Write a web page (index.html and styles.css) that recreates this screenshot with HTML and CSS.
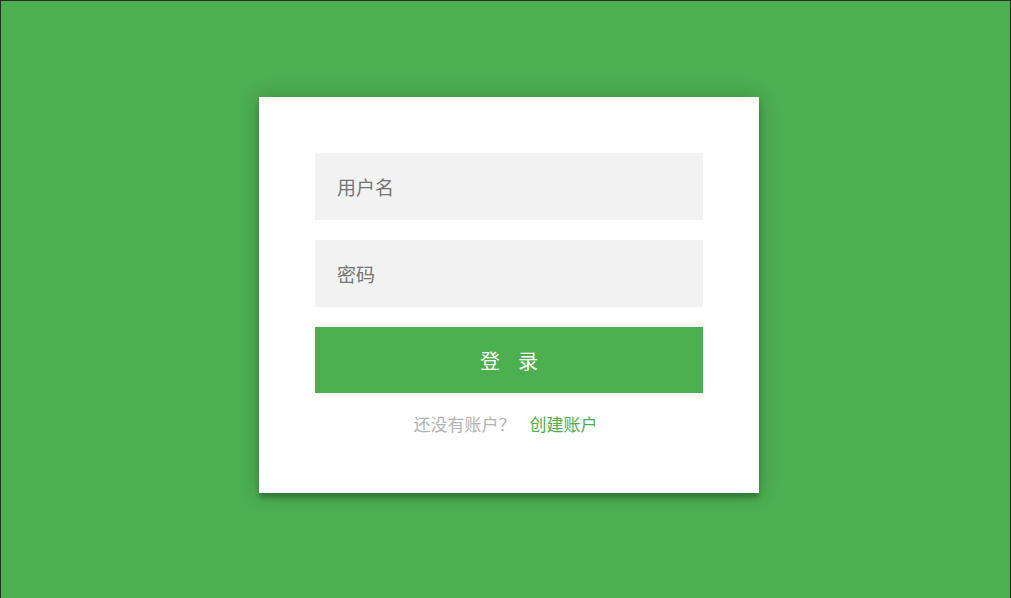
FILE: index.html
```html
<!DOCTYPE html>
<html lang="zh-CN">
<head>
<meta charset="utf-8">
<title>登录</title>
<link rel="stylesheet" href="styles.css">
</head>
<body>
<div class="page">
  <form class="card">
    <input class="field" type="text" placeholder="用户名">
    <input class="field" type="password" placeholder="密码">
    <button class="submit" type="button">登<span class="gap"></span>录</button>
    <p class="message">还没有账户？<a class="link" href="#">创建账户</a></p>
  </form>
</div>
</body>
</html>
```

FILE: styles.css
```css
html, body {
  margin: 0;
  padding: 0;
  overflow: hidden;
}
body {
  font-family: "Noto Sans CJK SC", "Liberation Sans", sans-serif;
}
.page {
  box-sizing: border-box;
  height: 620px;
  background: #4CAF50;
  border: 1px solid #2b2b2b;
  padding: 96px 0 0 258px;
}
.card {
  box-sizing: border-box;
  width: 500px;
  background: #fff;
  padding: 56px 56px 56px;
  margin: 0;
  box-shadow: 0 0 20px 0 rgba(0,0,0,0.2), 0 5px 5px 0 rgba(0,0,0,0.24);
  display: flex;
  flex-direction: column;
}
.field {
  box-sizing: border-box;
  display: block;
  width: 100%;
  height: 67px;
  margin: 0 0 20px;
  padding: 0 22px;
  border: 0;
  outline: 0;
  background: #f2f2f2;
  font-family: inherit;
  font-size: 19px;
  color: #333;
}
.field::placeholder {
  color: #757575;
}
.submit {
  display: block;
  width: 100%;
  height: 66px;
  border: 0;
  background: #4CAF50;
  color: #fff;
  font-family: inherit;
  font-size: 20px;
  cursor: pointer;
}
.gap {
  display: inline-block;
  width: 18px;
}
.message {
  margin: 19px 0 0;
  padding-right: 7px;
  line-height: 24px;
  height: 25px;
  text-align: center;
  font-size: 17px;
  color: #b3b3b3;
}
.link {
  color: #4CAF50;
  text-decoration: none;
  margin-left: 14px;
}
```
